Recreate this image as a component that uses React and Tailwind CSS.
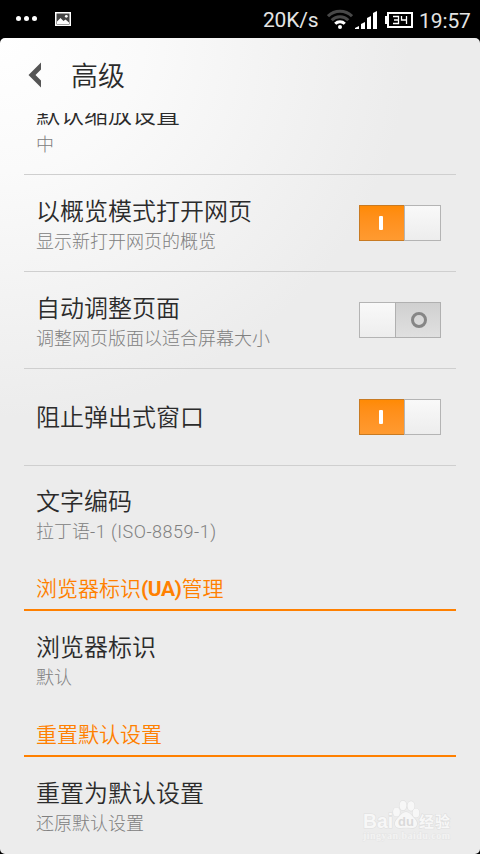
import React from "react";

const sections = [
  {
    rows: [
      { title: "默认缩放设置", sub: "中" },
      { title: "以概览模式打开网页", sub: "显示新打开网页的概览", on: true },
      { title: "自动调整页面", sub: "调整网页版面以适合屏幕大小", on: false },
      { title: "阻止弹出式窗口", on: true },
      { title: "文字编码", sub: <>拉丁语<span className="tracking-[0.5px]">-1 (ISO-8859-1)</span></>, short: true },
    ],
  },
  {
    header: <>浏览器标识<b className="font-bold tracking-[-0.5px]">(UA)</b>管理</>,
    rows: [{ title: "浏览器标识", sub: "默认" }],
  },
  {
    header: "重置默认设置",
    rows: [{ title: "重置为默认设置", sub: "还原默认设置" }],
  },
];

function StatusBar() {
  return (
    <div className="flex h-[38px] items-center justify-between bg-black pr-[9px] pl-4 text-[#e4e4e4]">
      <div className="flex items-center">
        <div className="-mt-px flex gap-[3px]">
          <span className="size-[5px] rounded-full bg-white" />
          <span className="size-[5px] rounded-full bg-white" />
          <span className="size-[5px] rounded-full bg-white" />
        </div>
        <svg className="ml-[18px]" width="16" height="14" viewBox="0 0 16 14">
          <rect x="0.75" y="0.75" width="14.5" height="12.5" fill="#444" stroke="#fff" strokeWidth="1.5" />
          <path d="M2 12V9.500L5.500 6l3 3 2-1.500L14 10.500V12z" fill="#fff" />
          <circle cx="11.3" cy="4.3" r="1.4" fill="#fff" />
        </svg>
      </div>
      <div className="flex items-center">
        <span className="mt-[2px] w-[57px] text-[21px] leading-6 tracking-[-0.2px] whitespace-nowrap">20K/s</span>
        <svg className="ml-[7px]" width="26" height="20" viewBox="0 0 26 20" fill="none" strokeWidth="3">
          <path d="M1 7.200a17 17 0 0 1 24 0" stroke="#484848" />
          <path d="M4.700 11.300a11.700 11.700 0 0 1 16.600 0" stroke="#484848" />
          <path d="M8.200 14.800a6.800 6.800 0 0 1 9.600 0" stroke="#fff" />
          <circle cx="13" cy="18" r="2" fill="#fff" />
        </svg>
        <svg className="mt-[2px] ml-[2px]" width="22" height="18" viewBox="0 0 22 18" fill="#fff">
          <path d="M0 17l4-2v3H0zM6 13l4-2v7H6zM12 7l4-2v13h-4zM18 2l4-2v18h-4z" />
        </svg>
        <svg className="mt-[2px] ml-[8px]" width="28" height="16" viewBox="0 0 28 16" fill="none" stroke="#fff">
          <rect x="3" y="1" width="24" height="14" strokeWidth="2" />
          <path d="M1 4v8" strokeWidth="2" />
          <path d="M8 4.500h5.500v7H8M9 8h4.500M16.500 4v4h5.500M21.500 4v8" strokeWidth="1.300" />
        </svg>
        <span className="mt-[3px] ml-[6px] w-[52px] text-[21px] leading-6 tracking-[-0.1px]">19:57</span>
      </div>
    </div>
  );
}

function Toggle({ on }) {
  if (on) {
    return (
      <div className="flex h-9 w-[82px] shrink-0 rounded-[1px]">
        <div className="flex w-[45px] items-center justify-center border border-r-0 border-[#c87a22] bg-linear-to-b from-[#ff8a04] to-[#ff9a30]">
          <span className="h-[14px] w-1 -translate-x-[1px] rounded-[1px] bg-white" />
        </div>
        <div className="flex-1 border border-[#b4b4b4] bg-linear-to-b from-[#f9f9f9] to-[#ededed]" />
      </div>
    );
  }
  return (
    <div className="flex h-9 w-[82px] shrink-0 rounded-[1px]">
      <div className="w-9 border border-r-0 border-[#b4b4b4] bg-linear-to-b from-[#f9f9f9] to-[#ededed]" />
      <div className="flex flex-1 items-center justify-center border border-[#b0b0b0] bg-linear-to-b from-[#d0d0d0] to-[#e0e0e0]">
        <span className="size-4 translate-x-[1px] rounded-full border-3 border-[#868686]" />
      </div>
    </div>
  );
}

function Row({ title, sub, on, short, divider }) {
  return (
    <div className={`flex items-center justify-between border-b pr-[15px] pl-3 ${short ? "h-24" : "h-[97px]"} ${divider ? "border-[#cfcfcf]" : "border-transparent"}`}>
      <div className={sub ? "pt-[5px]" : "pt-px"}>
        <div className="text-2xl leading-8 text-[#2b2b2b]">{title}</div>
        {sub && <div className="text-lg leading-7 font-light text-[#808080]">{sub}</div>}
      </div>
      {on !== undefined && <Toggle on={on} />}
    </div>
  );
}

function Watermark() {
  return (
    <svg className="absolute top-[800px] left-[362px]" width="90" height="44" viewBox="0 0 90 44" fill="#f7f7f7" stroke="#dfdfdf" strokeWidth="1.2">
      <g fontFamily="Liberation Sans" fontWeight="bold" paintOrder="stroke">
        <text x="1" y="28" fontSize="20" textLength="30" lengthAdjust="spacingAndGlyphs">Bai</text>
        <path d="M44 12c4 0 6 4 9 7 4 4 2 10-4 9-3-.5-7-.5-10 0-6 1-8-5-4-9 3-3 5-7 9-7z" />
        <ellipse cx="34.500" cy="12" rx="3.400" ry="4.500" />
        <ellipse cx="41" cy="5.500" rx="3.500" ry="4.800" />
        <ellipse cx="49" cy="6" rx="3.500" ry="4.800" />
        <ellipse cx="54" cy="13" rx="3.400" ry="4.500" />
        <text x="36" y="26" fontSize="13" fill="#dadada" stroke="none">du</text>
        <text x="57" y="27" fontSize="15" fontFamily="Noto Sans CJK SC" textLength="31">经验</text>
        <text x="1" y="39" fontSize="10" fill="#f3f3f3" stroke="#e4e4e4" strokeWidth="0.8" textLength="87" fontFamily="Liberation Serif">jingyan.baidu.com</text>
      </g>
    </svg>
  );
}

export default function App() {
  return (
    <div className="relative h-[854px] w-[480px] overflow-hidden bg-black font-['Roboto','Noto_Sans_CJK_SC',sans-serif]">
      <StatusBar />
      <div className="flex h-[816px] flex-col overflow-hidden rounded-[5px] bg-[#ececec] bg-[radial-gradient(ellipse_410px_380px_at_0_0,#ffffff_0%,#fafafa_35%,#ececec_100%)]">
        <div className="flex h-[75px] shrink-0 items-center pl-7">
          <svg className="-mt-[2px]" width="14" height="26" viewBox="0 0 14 26" fill="#555">
            <path d="M13 .5v7L7.500 13l5.500 5.500v7L.5 13z" />
          </svg>
          <h1 className="mt-[3px] ml-[29px] text-[27px] leading-9 font-[350] text-[#2b2b2b]">高级</h1>
        </div>
        <div className="min-h-0 flex-1 overflow-hidden px-6 font-[350]">
          <div className="-mt-[35px]">
            {sections.map((s, i) => (
              <section key={i}>
                {s.header && (
                  <h2 className="flex h-[49px] items-center border-b-2 border-[#ff8000] pt-[6px] pl-3 text-[21px] leading-8 font-[350] text-[#ff8000]">
                    <span>{s.header}</span>
                  </h2>
                )}
                {s.rows.map((r, j) => (
                  <Row key={r.title} {...r} divider={j < s.rows.length - 1} />
                ))}
              </section>
            ))}
          </div>
        </div>
      </div>
      <Watermark />
    </div>
  );
}
